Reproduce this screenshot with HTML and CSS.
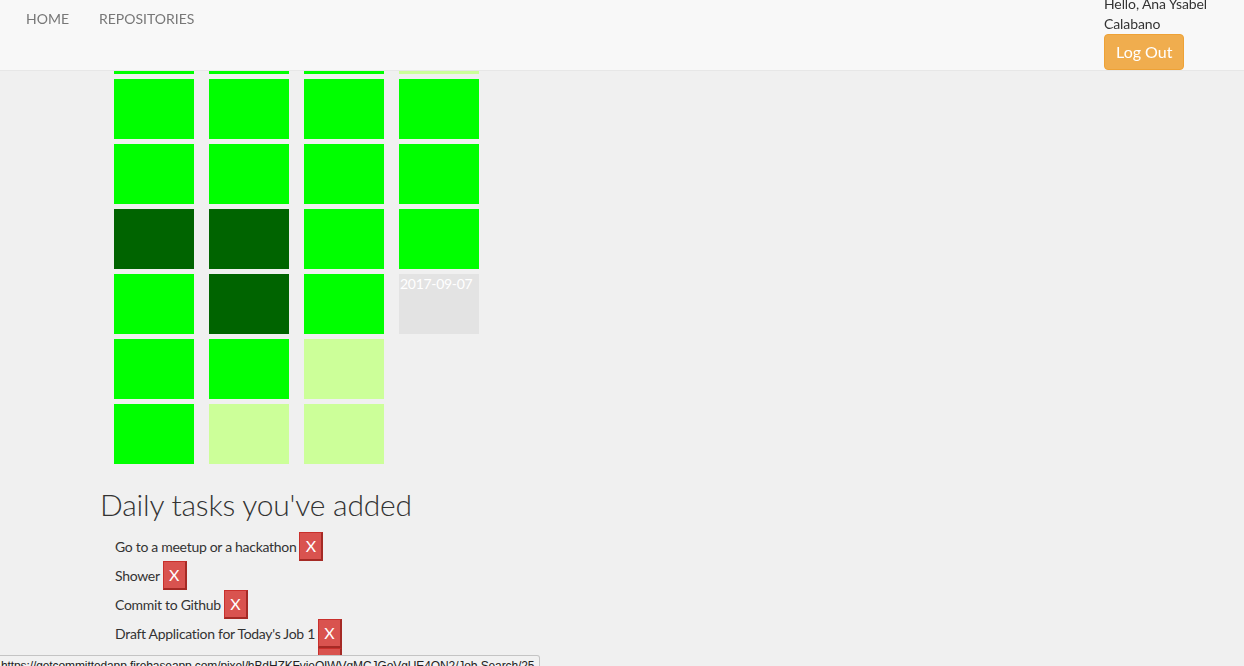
FILE: index.html
```html
<!DOCTYPE html>
<html lang="en">
<head>
<meta charset="utf-8">
<title>Get Committed</title>
<link rel="stylesheet" href="styles.css">
</head>
<body>
<nav class="navbar">
  <ul class="nav-links">
    <li><a href="#">HOME</a></li>
    <li><a href="#">REPOSITORIES</a></li>
  </ul>
  <div class="user">
    <div class="greeting">Hello, Ana Ysabel Calabano</div>
    <button class="btn-logout">Log Out</button>
  </div>
</nav>

<main class="page">
  <div class="calendar">
    <div class="week">
      <div class="day g"></div><div class="day g"></div><div class="day g"></div><div class="day d"></div><div class="day g"></div><div class="day g"></div><div class="day g"></div>
    </div>
    <div class="week">
      <div class="day g"></div><div class="day g"></div><div class="day g"></div><div class="day d"></div><div class="day d"></div><div class="day g"></div><div class="day l"></div>
    </div>
    <div class="week">
      <div class="day g"></div><div class="day g"></div><div class="day g"></div><div class="day g"></div><div class="day g"></div><div class="day l"></div><div class="day l"></div>
    </div>
    <div class="week">
      <div class="day l"></div><div class="day g"></div><div class="day g"></div><div class="day g"></div><div class="day e">2017-09-07</div>
    </div>
  </div>

  <h2 class="title">Daily tasks you've added</h2>
  <ul class="tasks">
    <li class="task"><span>Go to a meetup or a hackathon</span><button class="btn-x">X</button></li>
    <li class="task"><span>Shower</span><button class="btn-x">X</button></li>
    <li class="task"><span>Commit to Github</span><button class="btn-x">X</button></li>
    <li class="task"><span>Draft Application for Today's Job 1</span><button class="btn-x">X</button></li>
    <li class="task"><span>Draft Application for Today's Job 2</span><button class="btn-x">X</button></li>
  </ul>
</main>

<div class="statusbar">https://getcommittedapp.firebaseapp.com/pixel/hBdHZKFvieOIWVqMCJGoVgUE4QN2/Job Search/25</div>
</body>
</html>
```

FILE: styles.css
```css
* { box-sizing: border-box; }

html, body {
  margin: 0;
  padding: 0;
}

body {
  background: #f0f0f0;
  font-family: Lato, "Open Sans", sans-serif;
  font-size: 14px;
  line-height: 20px;
  color: #333;
  overflow: hidden;
  height: 666px;
}

.navbar {
  position: fixed;
  top: 0;
  left: 0;
  right: 0;
  height: 71px;
  background: #f8f8f8;
  border-bottom: 1px solid #e7e7e7;
  display: flex;
  justify-content: space-between;
  align-items: flex-start;
  z-index: 10;
}

.nav-links {
  list-style: none;
  margin: 0;
  padding: 0 0 0 11px;
  display: flex;
}

.nav-links a {
  display: block;
  padding: 9px 15px;
  line-height: 20px;
  color: #777;
  text-decoration: none;
  font-size: 14px;
}

.user {
  width: 140px;
  margin-top: -6px;
  display: flex;
  flex-direction: column;
  align-items: flex-start;
}

.greeting {
  width: 120px;
  color: #333;
  line-height: 20px;
  letter-spacing: -0.1px;
}

.btn-logout {
  height: 36px;
  padding: 6px 11px;
  font-family: Lato, sans-serif;
  font-size: 16px;
  line-height: 22px;
  color: #fff;
  background: #f0ad4e;
  border: 1px solid #eea236;
  border-radius: 4px;
}

.page {
  padding-left: 100px;
}

.calendar {
  display: flex;
  gap: 15px;
  margin-left: 14px;
  padding-top: 14px;
}

.week {
  display: flex;
  flex-direction: column;
  gap: 5px;
}

.day {
  width: 80px;
  height: 60px;
  color: #fff;
  font-size: 14px;
  line-height: 20px;
  letter-spacing: -0.3px;
  padding-left: 1px;
}

.g { background: #00ff00; }
.d { background: #006400; }
.l { background: #ccff99; }
.e { background: #e3e3e3; }

.title {
  margin: 24px 0 11px;
  font-size: 30px;
  font-weight: 300;
  line-height: 33px;
  letter-spacing: -0.2px;
  color: #333;
}

.tasks {
  list-style: none;
  margin: 0;
  padding: 0 0 0 15px;
}

.task {
  display: flex;
  align-items: center;
  gap: 3px;
  height: 29px;
  letter-spacing: -0.3px;
}

.btn-x {
  width: 24px;
  height: 29px;
  padding: 0;
  font-family: Lato, sans-serif;
  font-size: 16px;
  line-height: 20px;
  color: #fff;
  background: #d9534f;
  border-style: solid;
  border-width: 1px 2px 2px 1px;
  border-color: #c9302c #a52a25 #a52a25 #c9302c;
  border-radius: 0;
}

.statusbar {
  position: fixed;
  left: 0;
  bottom: -10px;
  width: 540px;
  height: 21px;
  padding: 2px 0 0 1px;
  background: #f1f1f1;
  border: 1px solid #c4c4c4;
  border-left: none;
  border-radius: 0 3px 0 0;
  font-family: "Liberation Sans", Arial, sans-serif;
  font-size: 12px;
  line-height: 16px;
  letter-spacing: -0.1px;
  color: #222;
  white-space: nowrap;
  overflow: hidden;
  z-index: 20;
}
```
